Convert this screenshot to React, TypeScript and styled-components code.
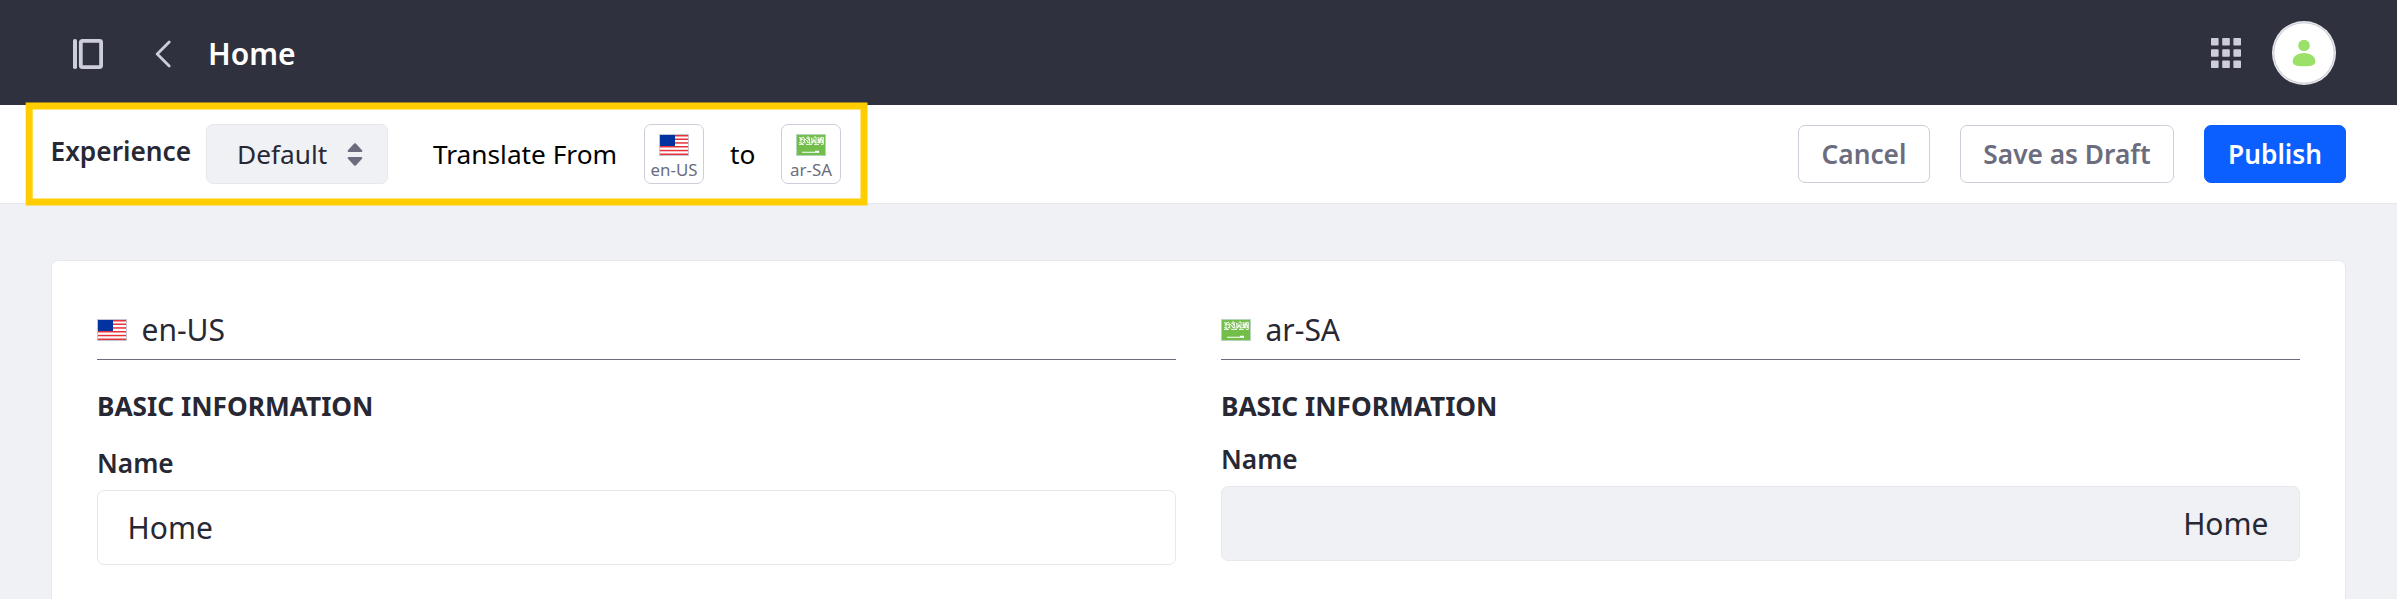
import React from "react";
import styled, { createGlobalStyle, css } from "styled-components";

const Global = createGlobalStyle`
  *, *::before, *::after { box-sizing: border-box; }
  body {
    margin: 0;
    background: #f0f1f5;
    color: #272833;
    font-family: "Noto Sans", "Open Sans", sans-serif;
    font-size: 26.25px;
    line-height: 40px;
    overflow: hidden;
  }
  svg { display: block; flex: none; }
`;

const Page = styled.div`
  position: relative;
  height: 599px;
  overflow: hidden;
  display: flex;
  flex-direction: column;
`;

const Header = styled.header`
  height: 105px;
  flex: none;
  background: #30313f;
  display: flex;
  align-items: center;
  padding: 0 61px 0 73px;
`;

const PanelIcon = styled.svg`
  margin: 3px 52px 0 0;
`;

const BackIcon = styled.svg`
  margin: 3px 37px 0 0;
`;

const PageTitle = styled.h1`
  margin: 2px auto 0 0;
  font-size: 30px;
  line-height: 40px;
  font-weight: 600;
  color: #fff;
`;

const AppsIcon = styled.svg`
  margin: 1px 31px 0 0;
`;

const Toolbar = styled.div`
  height: 99px;
  flex: none;
  background: #fff;
  border-bottom: 1px solid #e7e7ed;
  display: flex;
  align-items: center;
  padding: 0 51px 0 50.500px;
`;

const ExperienceLabel = styled.label`
  width: 155.500px;
  margin-top: -7px;
  font-weight: 600;
`;

const Select = styled.button`
  width: 182px;
  height: 60px;
  display: flex;
  align-items: center;
  justify-content: space-between;
  padding: 0 24px 0 30px;
  margin-right: 45px;
  border: 1px solid #e7e7ed;
  border-radius: 7px;
  background: #f0f1f5;
  color: inherit;
  font: inherit;
`;

const TranslateText = styled.span<{ $width: number }>`
  width: ${(p) => p.$width}px;
  color: #000;
  white-space: nowrap;
`;

const LocaleButton = styled.button`
  width: 60px;
  height: 60px;
  display: flex;
  flex-direction: column;
  align-items: center;
  padding: 9px 0 0;
  margin-right: 26px;
  border: 1px solid #cdced9;
  border-radius: 7px;
  background: #fff;
  color: #6b6c7e;
  font: inherit;
  font-size: 16.875px;
  line-height: 20px;
  white-space: nowrap;
`;

const LocaleCode = styled.span`
  margin-top: 4px;
`;

const Actions = styled.div`
  display: flex;
  gap: 30px;
  margin-left: auto;
`;

const ActionButton = styled.button<{ $width: number; $primary?: boolean }>`
  width: ${(p) => p.$width}px;
  height: 58px;
  padding: 0;
  border: 1px solid #cdced9;
  border-radius: 7px;
  background: #fff;
  color: #6b6c7e;
  font: inherit;
  font-weight: 600;
  white-space: nowrap;
  ${(p) =>
    p.$primary &&
    css`
      border-color: #0b5fff;
      background: #0b5fff;
      color: #fff;
    `}
`;

const Sheet = styled.main`
  flex: 1;
  margin: 56px 51px 0;
  padding: 44px 45px 0;
  border: 1px solid #e7e7ed;
  border-bottom: 0;
  border-radius: 7px 7px 0 0;
  background: #fff;
  display: grid;
  grid-template-columns: 1fr 1fr;
  gap: 45px;
`;

const Column = styled.section`
  display: flex;
  flex-direction: column;
`;

const LocaleHeading = styled.div`
  height: 55px;
  display: flex;
  align-items: center;
  gap: 14.500px;
  padding-bottom: 4px;
  border-bottom: 1px solid #6b6c7e;
  font-size: 30px;
`;

const SectionTitle = styled.h2`
  margin: 26px 0 0;
  font-size: 26.25px;
  line-height: 40px;
  font-weight: 700;
  text-transform: uppercase;
`;

const FieldLabel = styled.label<{ $gap: number }>`
  margin-top: ${(p) => p.$gap}px;
  font-weight: 600;
`;

const Field = styled.input<{ $rtl?: boolean }>`
  width: 100%;
  height: 75px;
  margin: 7px 0 0;
  padding: 0 30.500px 0 29.500px;
  border: 1px solid #e7e7ed;
  border-radius: 7px;
  background: ${(p) => (p.$rtl ? "#f0f1f5" : "#fff")};
  color: #272833;
  font: inherit;
  font-size: 30px;
  text-align: ${(p) => (p.$rtl ? "right" : "left")};
`;

const Highlight = styled.svg`
  position: absolute;
  left: 25px;
  top: 102px;
`;

const UsFlag = () => (
  <svg width="30" height="22" viewBox="0 0 30 22">
    <rect width="30" height="22" fill="#c3c6d2" />
    <rect x="1" y="1" width="28" height="20" fill="#fff" />
    {[1, 4.5, 8.2, 12, 15.8, 19.5].map((y) => (
      <rect key={y} x="1" y={y} width="28" height="1.5" fill="#e6333a" />
    ))}
    <rect x="1" y="1" width="15" height="11" fill="#0033a0" />
  </svg>
);

const SaFlag = () => (
  <svg width="30" height="22" viewBox="0 0 30 22">
    <rect width="30" height="22" fill="#b5d3bd" />
    <rect x="1" y="1" width="28" height="20" fill="#73be4a" />
    <g fill="none" stroke="#fff" strokeWidth="0.9">
      <path d="M3 3.500l2 1 3-1.500M3.500 6l3-.5 1.500 1M3 8.500l3 1 3-2M5 3v6M8 3.500l1 6M10 4l3 1-2 3 3 1M13 3l1 6.500M15 3.500l1 2 2-2M16 5v4.500l2-4 2 4V3M22 3l1 6 2-5 2 5M25 3l2 1M3 10.400h5M10 10.400h6M18 10.400h5M25 10.400h2.500M9 5l2 2M21 6h6M15 7.800l5 .3M21 8.500l6-.5M11 3h2M18 3h2M27.300 3v7M24 3v6.500" />
      <path d="M6 18.300h16M19 17.300h3.500v1.700" strokeWidth="1.100" />
    </g>
  </svg>
);

interface LocaleColumnProps {
  code: string;
  flag: React.ReactNode;
  labelGap: number;
  rtl?: boolean;
}

const LocaleColumn = ({ code, flag, labelGap, rtl }: LocaleColumnProps) => (
  <Column>
    <LocaleHeading>
      {flag}
      {code}
    </LocaleHeading>
    <SectionTitle>Basic Information</SectionTitle>
    <FieldLabel $gap={labelGap}>Name</FieldLabel>
    <Field $rtl={rtl} readOnly value="Home" />
  </Column>
);

export default function App() {
  return (
    <Page>
      <Global />
      <Header>
        <PanelIcon width="30" height="30" viewBox="0 0 30 30">
          <rect width="4" height="30" rx="1.8" fill="#cdced9" />
          <rect x="7.8" y="1.9" width="20.3" height="26.2" rx="1.5" fill="none" stroke="#cdced9" strokeWidth="3.8" />
        </PanelIcon>
        <BackIcon width="16" height="28" viewBox="0 0 16 28">
          <path d="M14.2 2 2.2 14 14.2 26" fill="none" stroke="#cdced9" strokeWidth="2.8" strokeLinecap="round" strokeLinejoin="round" />
        </BackIcon>
        <PageTitle>Home</PageTitle>
        <AppsIcon width="30" height="30" viewBox="0 0 30 30" fill="#cdced9">
          {[0, 11.2, 22.4].map((y) =>
            [0, 11.2, 22.4].map((x) => <rect key={`${x}-${y}`} x={x} y={y} width="7.6" height="7.6" rx="0.8" />)
          )}
        </AppsIcon>
        <svg width="64" height="64" viewBox="0 0 64 64">
          <circle cx="32" cy="32" r="32" fill="#e7e7ed" />
          <circle cx="32" cy="32" r="30.2" fill="#fff" stroke="#bfc0ca" strokeWidth="0.8" />
          <circle cx="32" cy="24.5" r="5.8" fill="#9be169" />
          <path d="M20.7 40.5C20.7 36 25 32 32 32s11.3 4 11.3 8.5c0 3.3-3 4.8-11.3 4.8s-11.3-1.5-11.3-4.8z" fill="#9be169" />
        </svg>
      </Header>
      <Toolbar>
        <ExperienceLabel>Experience</ExperienceLabel>
        <Select>
          Default
          <svg width="16" height="23" viewBox="0 0 16 23" fill="#6b6c7e">
            <path d="M7.2.6Q8 0 8.800.6L15.300 7.500Q15.600 9 14.500 9H1.500Q.4 9 .7 7.500ZM7.200 22.400Q8 23 8.800 22.400L15.300 15.500Q15.600 14 14.500 14H1.500Q.4 14 .7 15.500Z" />
          </svg>
        </Select>
        <TranslateText $width={211}>Translate From</TranslateText>
        <LocaleButton>
          <UsFlag />
          <LocaleCode>en-US</LocaleCode>
        </LocaleButton>
        <TranslateText $width={51}>to</TranslateText>
        <LocaleButton>
          <SaFlag />
          <LocaleCode>ar-SA</LocaleCode>
        </LocaleButton>
        <Actions>
          <ActionButton $width={132}>Cancel</ActionButton>
          <ActionButton $width={214}>Save as Draft</ActionButton>
          <ActionButton $width={142} $primary>Publish</ActionButton>
        </Actions>
      </Toolbar>
      <Sheet>
        <LocaleColumn code="en-US" flag={<UsFlag />} labelGap={17} />
        <LocaleColumn code="ar-SA" flag={<SaFlag />} labelGap={13} rtl />
      </Sheet>
      <Highlight width="844" height="105" viewBox="0 0 844 105">
        <rect x="4.2" y="4" width="834.8" height="96" fill="none" stroke="#ffcd00" strokeWidth="7" />
      </Highlight>
    </Page>
  );
}
